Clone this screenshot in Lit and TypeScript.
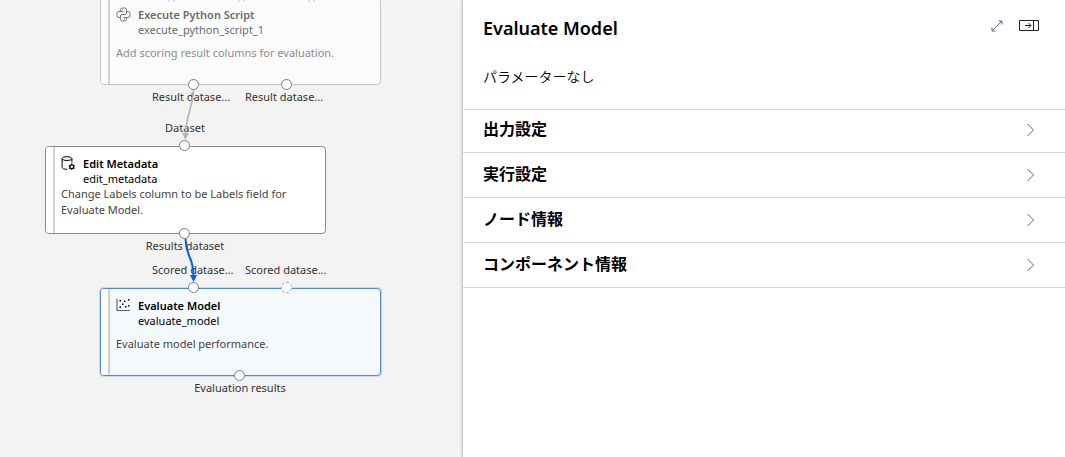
import { LitElement, html, svg, css } from "lit";
import { customElement, property } from "lit/decorators.js";
import { classMap } from "lit/directives/class-map.js";
import { styleMap } from "lit/directives/style-map.js";

type IconName = "python" | "metadata" | "scatter";

interface Port {
  x: number;
  side: "top" | "bottom";
  label: string;
  dashed?: boolean;
}

interface GraphNode {
  x: number;
  y: number;
  icon: IconName;
  title: string;
  name: string;
  description: string;
  state: "dimmed" | "normal" | "selected";
  ports: Port[];
}

const NODES: GraphNode[] = [
  {
    x: 100, y: -3, icon: "python", title: "Execute Python Script", name: "execute_python_script_1",
    description: "Add scoring result columns for evaluation.", state: "dimmed",
    ports: [
      { x: 94, side: "bottom", label: "Result datase..." },
      { x: 187, side: "bottom", label: "Result datase..." },
    ],
  },
  {
    x: 45, y: 146, icon: "metadata", title: "Edit Metadata", name: "edit_metadata",
    description: "Change Labels column to be Labels field for Evaluate Model.", state: "normal",
    ports: [
      { x: 140, side: "top", label: "Dataset" },
      { x: 140, side: "bottom", label: "Results dataset" },
    ],
  },
  {
    x: 100, y: 288, icon: "scatter", title: "Evaluate Model", name: "evaluate_model",
    description: "Evaluate model performance.", state: "selected",
    ports: [
      { x: 94, side: "top", label: "Scored datase..." },
      { x: 187, side: "top", label: "Scored datase...", dashed: true },
      { x: 140, side: "bottom", label: "Evaluation results" },
    ],
  },
];

const ICONS = {
  python: svg`
    <g fill="none" stroke="currentColor" stroke-width="1">
      <path d="M4.500 4.500V2.500Q4.500 1 6.500 1H8.500Q10.500 1 10.500 2.500V6Q10.500 7.500 9 7.500H6Q4.500 7.500 4.500 9V10.500H3Q1 10.500 1 8.500V6.500Q1 4.500 3 4.500H7.500"/>
      <path d="M10.500 4.500H12Q14 4.500 14 6.500V8.500Q14 10.500 12 10.500H7.500M4.500 10.500V12.500Q4.500 14 6.500 14H8.500Q10.500 14 10.500 12.500V10.500"/>
    </g>
    <circle cx="6.500" cy="2.800" r=".6" fill="currentColor"/>
    <circle cx="8.500" cy="12.200" r=".6" fill="currentColor"/>`,
  metadata: svg`
    <g fill="none" stroke="currentColor" stroke-width="1">
      <ellipse cx="6" cy="2.600" rx="4.900" ry="1.900"/>
      <path d="M1.100 2.600V11.500Q1.500 13.300 6 13.400M10.900 2.600V6.500"/>
      <circle cx="10.800" cy="10.800" r="1.900" stroke-width="1.200"/>
      <path d="M10.800 7.600v1.300M10.800 12.700v1.300M8 9.200l1.200.7M12.400 11.700l1.200.7M8 12.400l1.200-.7M12.400 9.900l1.200-.7" stroke-width="1.200"/>
    </g>`,
  scatter: svg`
    <path d="M1 1V12.500H14" fill="none" stroke="#666" stroke-width="1.200"/>
    <path d="M3.500 2h1.500v1.500H3.500zM8 2.500h1.500V4H8zM12 1h1.500v1.500H12zM6 5.500h1.500V7H6zM12 7h1.500v1.500H12zM9 8h1.500v1.500H9zM3.500 8.500H5V10H3.500z" fill="currentColor"/>`,
};

@customElement("graph-node")
class GraphNodeElement extends LitElement {
  @property({ attribute: false }) node!: GraphNode;

  static styles = css`
    :host { display: block; width: 281px; color: #000; }
    .card {
      box-sizing: border-box; height: 88px; display: flex; overflow: hidden;
      border: 1px solid #8a8a8a; border-radius: 4px; background: #fff;
    }
    .strip { flex: none; width: 7px; background: #fff; border-right: 2px solid #d0d0d0; }
    .body { flex: 1; min-width: 0; padding: 9px 16px 0 6px; }
    .head { display: flex; gap: 7px; }
    .icon { flex: none; width: 15px; height: 15px; }
    .title, .name { margin: 0; font-size: 11px; line-height: 15px; }
    .title { font-weight: 600; }
    .text { margin: 0; font-size: 11px; line-height: 16px; color: #444; }
    .roomy .text { margin-top: 8px; }
    .dimmed .card { background: #fbfbfb; border-color: #c4c4c4; }
    .dimmed .title, .dimmed .name { color: #6c6c6c; }
    .dimmed .icon { color: #777; }
    .dimmed .text { color: #8c8c8c; }
    .selected .card { background: #f3f9fd; border-color: #4a88e4; box-shadow: 0 0 0 1px rgba(74, 136, 228, 0.25); }
    .port {
      position: absolute; box-sizing: border-box; width: 11px; height: 11px; margin-left: -5px;
      border: 1px solid #7c7c7c; border-radius: 50%; background: #fff;
    }
    .port.top { top: -6px; }
    .port.bottom { bottom: -5px; }
    .port.dashed { border-style: dashed; border-color: #aaa; }
    .label {
      position: absolute; width: 120px; margin-left: -60px; text-align: center;
      font-size: 11px; line-height: 16px; white-space: nowrap; color: #333;
    }
    .label.clipped { width: 84px; margin-left: -42px; text-align: left; }
    .label.top { top: -26px; }
    .label.bottom { bottom: -20px; }
  `;

  render() {
    const n = this.node;
    return html`
      <article class=${classMap({ [n.state]: true, roomy: n.icon !== "metadata" })}>
        <div class="card">
          <div class="strip"></div>
          <div class="body">
            <div class="head">
              <svg class="icon" viewBox="0 0 15 15" aria-hidden="true">${ICONS[n.icon]}</svg>
              <div>
                <h3 class="title">${n.title}</h3>
                <p class="name">${n.name}</p>
              </div>
            </div>
            <p class="text">${n.description}</p>
          </div>
        </div>
        ${n.ports.map((p) => html`
          <span class="label ${p.side} ${p.label.endsWith("...") ? "clipped" : ""}" style=${styleMap({ left: `${p.x}px` })}>${p.label}</span>
          <span class="port ${p.side} ${p.dashed ? "dashed" : ""}" style=${styleMap({ left: `${p.x - 1}px` })}></span>`)}
      </article>`;
  }
}

@customElement("pipeline-canvas")
class PipelineCanvas extends LitElement {
  static styles = css`
    :host { display: block; position: relative; overflow: hidden; background: #f3f3f3; }
    .node { position: absolute; }
    .edges { position: absolute; inset: 0; width: 100%; height: 100%; pointer-events: none; }
  `;

  render() {
    return html`
      ${NODES.map((n) => html`
        <graph-node class="node" .node=${n} style=${styleMap({ left: `${n.x}px`, top: `${n.y}px` })}></graph-node>`)}
      <svg class="edges" aria-hidden="true">
        <path d="M168 1h2M173 1.500l2-1.500M238 1h2M243 1.500l2-1.500M308 1h2M313 1.500l2-1.500" stroke="#c4c4c4"/>
        <path d="M193.500 90C193 108 186 114 185.500 134" fill="none" stroke="#b3b3b3" stroke-width="1.500"/>
        <path d="M182 133H189L185.500 140Z" fill="#b3b3b3"/>
        <path d="M185.500 239C186 258 193.500 256 193.500 276" fill="none" stroke="#0a5cd8" stroke-width="2"/>
        <path d="M190 275H197L193.500 282Z" fill="#0a5cd8"/>
      </svg>`;
  }
}

@customElement("details-panel")
class DetailsPanel extends LitElement {
  static styles = css`
    :host { display: block; background: #fff; border-left: 1px solid #c8c8c8; box-shadow: 0 0 3px rgba(0, 0, 0, 0.2); color: #000; }
    .header { display: flex; align-items: center; padding: 12px 26px 0 20px; }
    .heading { flex: 1; margin: 0; font-size: 18px; line-height: 32px; font-weight: 600; }
    .tools { display: flex; align-items: center; gap: 16px; padding-bottom: 4px; }
    button { font: inherit; color: inherit; background: none; border: 0; padding: 0; cursor: pointer; }
    .tool { display: flex; }
    .empty { margin: 0; padding: 22px 20px; font-size: 14px; line-height: 21px; font-weight: 350; }
    .list { margin: 0; padding: 0; list-style: none; }
    .item { border-top: 1px solid #d6d6d6; }
    .item:last-child { border-bottom: 1px solid #d6d6d6; }
    .section {
      width: 100%; display: flex; align-items: center; justify-content: space-between;
      padding: 9px 30px 11px 20px; font-size: 16px; line-height: 24px; font-weight: 700; text-align: left;
    }
    .item:first-child .section { padding-top: 7px; }
    .chevron { width: 9px; height: 14px; }
  `;

  render() {
    return html`
      <header class="header">
        <h2 class="heading">Evaluate Model</h2>
        <div class="tools">
          <button class="tool" aria-label="Expand">
            <svg width="12" height="12" viewBox="0 0 12 12" fill="none" stroke="#5d6488">
              <path d="M1 11L11 1M7.500 1H11V4.500M1 7.500V11H4.500"/>
            </svg>
          </button>
          <button class="tool" aria-label="Collapse">
            <svg width="20" height="12" viewBox="0 0 20 12" fill="none" stroke="#222">
              <path d="M.5.5H19.500V10.500H.5ZM14.500.5V10.500M6 5.500H12M9.500 3L12 5.500L9.500 8"/>
            </svg>
          </button>
        </div>
      </header>
      <p class="empty">パラメーターなし</p>
      <ul class="list">
        ${["出力設定", "実行設定", "ノード情報", "コンポーネント情報"].map((name) => html`
          <li class="item">
            <button class="section" aria-expanded="false">
              ${name}
              <svg class="chevron" viewBox="0 0 9 14" fill="none" stroke="#5d6488" aria-hidden="true">
                <path d="M1.500 2L7.500 8L1.500 14"/>
              </svg>
            </button>
          </li>`)}
      </ul>`;
  }
}

@customElement("app-root")
class AppRoot extends LitElement {
  static styles = css`
    :host {
      display: grid; grid-template-columns: minmax(0, 154fr) minmax(0, 201fr); min-height: 100vh;
      font-family: "Noto Sans", "Noto Sans CJK JP", sans-serif;
    }
    .panel { position: relative; }
  `;

  render() {
    return html`
      <pipeline-canvas></pipeline-canvas>
      <details-panel class="panel"></details-panel>`;
  }
}
